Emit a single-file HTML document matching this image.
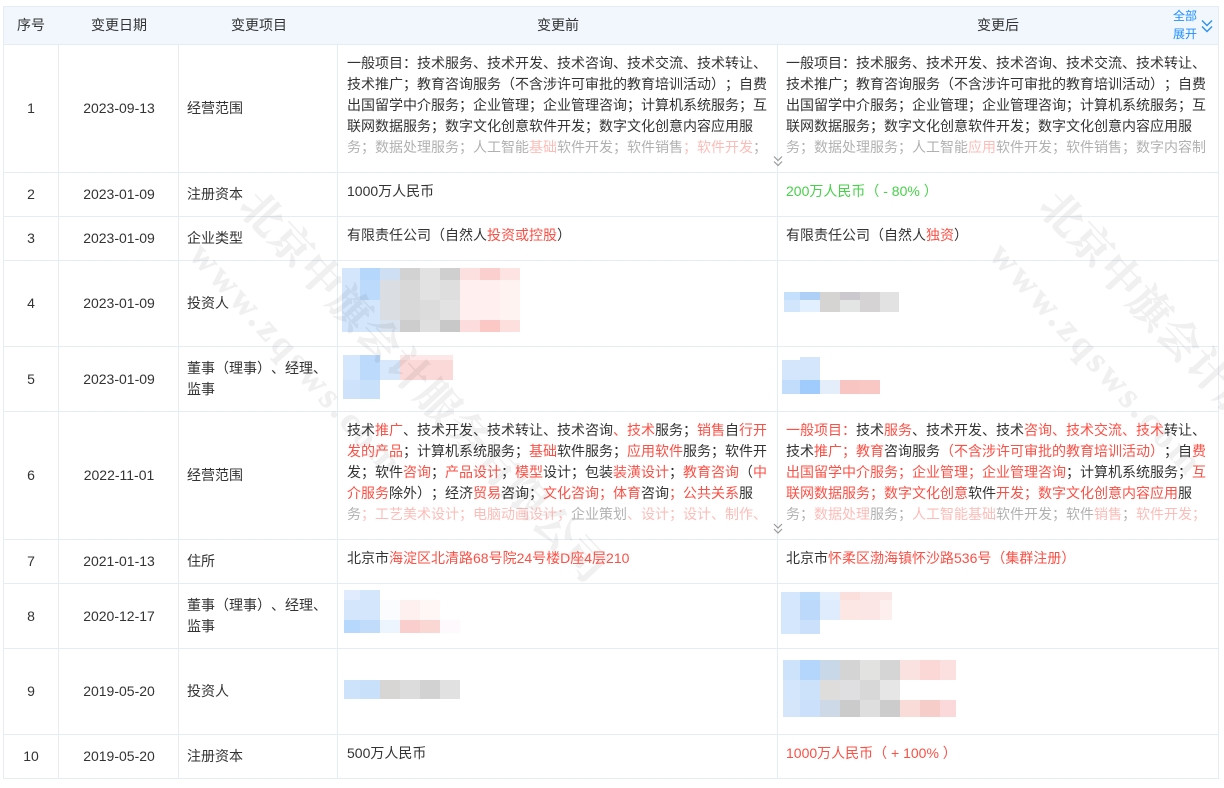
<!DOCTYPE html>
<html lang="zh-CN">
<head>
<meta charset="utf-8">
<title>变更记录</title>
<style>
html,body{margin:0;padding:0;background:#fff;}
body{position:relative;width:1224px;height:788px;overflow:hidden;font-family:"Liberation Sans","Noto Sans CJK SC",sans-serif;font-size:14px;color:#333;text-spacing-trim:space-all;font-feature-settings:"chws" 0,"halt" 0;}
svg.l{position:absolute;left:0;top:0;}
.t{position:absolute;white-space:nowrap;line-height:21px;height:21px;}
.c{text-align:center;transform:translateX(-50%);}
b{font-weight:normal;color:#fa5045;}
.f{opacity:.38;}
.g{color:#46d148;}
.r{color:#fa5045;}
</style>
</head>
<body>
<svg class="l" width="1224" height="788" shape-rendering="crispEdges">
<rect x="3" y="7" width="1215" height="37" fill="#f1f7fd"/>
<g fill="#e4edf5">
<rect x="3" y="6" width="1216" height="1"/>
<rect x="3" y="44" width="1216" height="1"/>
<rect x="3" y="172" width="1216" height="1"/>
<rect x="3" y="216" width="1216" height="1"/>
<rect x="3" y="260" width="1216" height="1"/>
<rect x="3" y="346" width="1216" height="1"/>
<rect x="3" y="411" width="1216" height="1"/>
<rect x="3" y="539" width="1216" height="1"/>
<rect x="3" y="583" width="1216" height="1"/>
<rect x="3" y="648" width="1216" height="1"/>
<rect x="3" y="734" width="1216" height="1"/>
<rect x="3" y="778" width="1216" height="1"/>
<rect x="3" y="6" width="1" height="773"/>
<rect x="58" y="44" width="1" height="735"/>
<rect x="178" y="44" width="1" height="735"/>
<rect x="337" y="44" width="1" height="735"/>
<rect x="777" y="44" width="1" height="735"/>
<rect x="1218" y="6" width="1" height="773"/>
</g>
<!-- row 4 before -->
<g>
<rect x="342" y="268" width="18" height="64" fill="#d3e6fc"/>
<rect x="360" y="268" width="20" height="12" fill="#b5d7fc"/><rect x="360" y="280" width="20" height="20" fill="#bcdafc"/><rect x="360" y="300" width="20" height="32" fill="#d3e6fc"/>
<rect x="380" y="268" width="20" height="12" fill="#cfdff3"/><rect x="380" y="280" width="20" height="40" fill="#dadee3"/><rect x="380" y="320" width="20" height="12" fill="#d8e3ef"/>
<rect x="400" y="268" width="20" height="12" fill="#d2d2d2"/><rect x="400" y="280" width="20" height="40" fill="#d8d8d8"/><rect x="400" y="320" width="20" height="12" fill="#cdcdcd"/>
<rect x="420" y="268" width="20" height="12" fill="#e2e2e2"/><rect x="420" y="280" width="20" height="20" fill="#e2e2e2"/><rect x="420" y="300" width="20" height="20" fill="#dcdcdc"/><rect x="420" y="320" width="20" height="12" fill="#dfdfdf"/>
<rect x="440" y="268" width="20" height="12" fill="#cfcfcf"/><rect x="440" y="280" width="20" height="20" fill="#dedede"/><rect x="440" y="300" width="20" height="20" fill="#e2e2e2"/><rect x="440" y="320" width="20" height="12" fill="#c8c8c8"/>
<rect x="460" y="268" width="20" height="12" fill="#fcdfdf"/><rect x="460" y="280" width="20" height="40" fill="#fff0ef"/><rect x="460" y="320" width="20" height="12" fill="#fcdcdc"/>
<rect x="480" y="268" width="20" height="12" fill="#fbcfcd"/><rect x="480" y="280" width="20" height="40" fill="#ffefee"/><rect x="480" y="320" width="20" height="12" fill="#fbc8c6"/>
<rect x="500" y="268" width="20" height="12" fill="#fde4e2"/><rect x="500" y="280" width="20" height="40" fill="#fff3f2"/><rect x="500" y="320" width="20" height="12" fill="#fde0de"/>
</g>
<!-- row 4 after -->
<g>
<rect x="784" y="292" width="16" height="8" fill="#c5e0fd"/><rect x="784" y="300" width="16" height="12" fill="#d1e5fc"/>
<rect x="800" y="292" width="20" height="8" fill="#aed0f6"/><rect x="800" y="300" width="20" height="12" fill="#e2effe"/>
<rect x="820" y="292" width="20" height="20" fill="#d6d3d3"/>
<rect x="840" y="292" width="20" height="8" fill="#cbc9cd"/><rect x="840" y="300" width="20" height="12" fill="#e3e4e4"/>
<rect x="860" y="292" width="20" height="20" fill="#d5d3d3"/>
<rect x="880" y="292" width="19" height="20" fill="#e2e2e2"/>
</g>
<!-- row 5 before -->
<g>
<rect x="343" y="355" width="17" height="25" fill="#d5e7fd"/><rect x="343" y="380" width="17" height="19" fill="#cfe2fb"/>
<rect x="360" y="355" width="20" height="25" fill="#bcdafc"/><rect x="360" y="380" width="20" height="19" fill="#c9e0fb"/>
<rect x="380" y="360" width="20" height="20" fill="#d8e8fc"/>
<rect x="400" y="355" width="53" height="5" fill="#fde8e7"/><rect x="400" y="360" width="53" height="20" fill="#fbd9d8"/>
</g>
<!-- row 5 after -->
<g>
<rect x="782" y="360" width="18" height="20" fill="#d3e6fc"/><rect x="800" y="357" width="20" height="23" fill="#d3e6fc"/>
<rect x="782" y="380" width="18" height="14" fill="#c2dcfb"/><rect x="800" y="380" width="20" height="14" fill="#9fcbfd"/>
<rect x="820" y="380" width="20" height="14" fill="#e3eefa"/><rect x="840" y="380" width="20" height="14" fill="#f9c5c3"/><rect x="860" y="380" width="20" height="14" fill="#f9c8c5"/>
</g>
<!-- row 8 before -->
<g>
<rect x="344" y="590" width="16" height="10" fill="#e0ecfd"/><rect x="360" y="590" width="20" height="10" fill="#d3e6fc"/>
<rect x="344" y="600" width="36" height="20" fill="#d3e6fc"/>
<rect x="380" y="600" width="20" height="20" fill="#fbfcfe"/><rect x="400" y="600" width="20" height="20" fill="#fef0ee"/><rect x="420" y="600" width="20" height="20" fill="#fff7f5"/>
<rect x="344" y="620" width="16" height="13" fill="#b6d8fd"/><rect x="360" y="620" width="20" height="13" fill="#c1dcfb"/><rect x="380" y="620" width="20" height="13" fill="#ecf4fd"/>
<rect x="400" y="620" width="20" height="13" fill="#f9cecc"/><rect x="420" y="620" width="20" height="13" fill="#fbd7d4"/><rect x="440" y="620" width="20" height="13" fill="#fdf9fc"/>
</g>
<!-- row 8 after -->
<g>
<rect x="781" y="592" width="19" height="42" fill="#d5e7fd"/>
<rect x="800" y="592" width="20" height="8" fill="#bedcfc"/><rect x="800" y="600" width="20" height="20" fill="#bcd8fa"/><rect x="800" y="620" width="20" height="14" fill="#cbe1fb"/>
<rect x="820" y="592" width="20" height="8" fill="#e3effd"/><rect x="820" y="600" width="20" height="20" fill="#deecfd"/>
<rect x="840" y="592" width="20" height="8" fill="#fbdfdc"/><rect x="840" y="600" width="20" height="20" fill="#fde7e5"/>
<rect x="860" y="592" width="20" height="28" fill="#fbe6e5"/>
<rect x="880" y="592" width="12" height="8" fill="#fbe6e5"/><rect x="880" y="600" width="12" height="20" fill="#fdefee"/>
</g>
<!-- row 9 before -->
<g>
<rect x="344" y="680" width="16" height="19" fill="#cde2fb"/><rect x="360" y="680" width="20" height="19" fill="#c9e0fa"/>
<rect x="380" y="680" width="20" height="19" fill="#d8d6d5"/><rect x="400" y="680" width="20" height="19" fill="#dcdcdc"/>
<rect x="420" y="680" width="20" height="19" fill="#d2d2d2"/><rect x="440" y="680" width="20" height="19" fill="#e1e1e1"/>
</g>
<!-- row 9 after -->
<g>
<rect x="783" y="660" width="17" height="20" fill="#cde3fc"/><rect x="800" y="660" width="20" height="20" fill="#b5d6fc"/><rect x="820" y="660" width="20" height="20" fill="#c9d8e9"/>
<rect x="840" y="660" width="20" height="20" fill="#d4d4d4"/><rect x="860" y="660" width="20" height="20" fill="#e2e2e0"/><rect x="880" y="660" width="20" height="20" fill="#d5d5d5"/>
<rect x="900" y="660" width="20" height="20" fill="#fae2e0"/><rect x="920" y="660" width="20" height="20" fill="#fbd8d5"/><rect x="940" y="660" width="16" height="20" fill="#fce0df"/>
<rect x="783" y="680" width="17" height="20" fill="#d3e6fc"/><rect x="800" y="680" width="20" height="20" fill="#cbe2fa"/><rect x="820" y="680" width="20" height="20" fill="#dfdcdc"/>
<rect x="840" y="680" width="20" height="20" fill="#dfdfe1"/><rect x="860" y="680" width="20" height="20" fill="#d8d8d8"/><rect x="880" y="680" width="20" height="20" fill="#e6e6e6"/>
<rect x="783" y="700" width="17" height="17" fill="#d5e6fa"/><rect x="800" y="700" width="20" height="17" fill="#cbe1fb"/><rect x="820" y="700" width="20" height="17" fill="#cdd9e6"/>
<rect x="840" y="700" width="20" height="17" fill="#cbcbcb"/><rect x="860" y="700" width="20" height="17" fill="#dedede"/><rect x="880" y="700" width="20" height="17" fill="#cccccc"/>
<rect x="900" y="700" width="20" height="17" fill="#f9dcd8"/><rect x="920" y="700" width="20" height="17" fill="#f7cdca"/><rect x="940" y="700" width="16" height="17" fill="#fbd9db"/>
</g>
</svg>

<svg class="l" width="1224" height="788" style="overflow:hidden;mix-blend-mode:multiply">
<g fill="#f0f0f0" stroke="#f0f0f0" stroke-width=".5" font-weight="700" font-family="'Liberation Serif','Noto Serif CJK SC',serif">
<text transform="translate(237 208) rotate(47)" font-size="42" letter-spacing="1">北京中旗会计服务有限公司</text>
<text transform="translate(188 256) rotate(48)" font-size="36" letter-spacing="4">www.zqsws.com</text>
<text transform="translate(1037 208) rotate(47)" font-size="42" letter-spacing="1">北京中旗会计服务有限公司</text>
<text transform="translate(988 256) rotate(48)" font-size="36" letter-spacing="4">www.zqsws.com</text>
</g>
</svg>

<!-- header -->
<div class="t c" style="left:31px;top:15px">序号</div>
<div class="t c" style="left:119px;top:15px">变更日期</div>
<div class="t c" style="left:259px;top:15px">变更项目</div>
<div class="t c" style="left:558px;top:15px">变更前</div>
<div class="t c" style="left:998px;top:15px">变更后</div>
<div class="t" style="left:1173px;top:8px;font-size:12px;line-height:17px;height:17px;color:#1f8fff">全部</div>
<div class="t" style="left:1173px;top:26px;font-size:12px;line-height:17px;height:17px;color:#1f8fff">展开</div>
<svg class="l" width="1224" height="788" style="pointer-events:none">
<path d="M1202 20.5l5 5 5-5M1202 26.5l5 5 5-5" fill="none" stroke="#2b8ff5" stroke-width="1.4"/>
<path d="M774 156.5l4 4 4-4M774 161.5l4 4 4-4" fill="none" stroke="#9a9a9a" stroke-width="1.2"/>
<path d="M774 524l4 4 4-4M774 529l4 4 4-4" fill="none" stroke="#9a9a9a" stroke-width="1.2"/>
</svg>

<!-- index col -->
<div class="t c" style="left:31px;top:98px">1</div>
<div class="t c" style="left:31px;top:184px">2</div>
<div class="t c" style="left:31px;top:228px">3</div>
<div class="t c" style="left:31px;top:293px">4</div>
<div class="t c" style="left:31px;top:369px">5</div>
<div class="t c" style="left:31px;top:465px">6</div>
<div class="t c" style="left:31px;top:551px">7</div>
<div class="t c" style="left:31px;top:606px">8</div>
<div class="t c" style="left:31px;top:681px">9</div>
<div class="t c" style="left:31px;top:746px">10</div>

<!-- date col -->
<div class="t c" style="left:119px;top:98px">2023-09-13</div>
<div class="t c" style="left:119px;top:184px">2023-01-09</div>
<div class="t c" style="left:119px;top:228px">2023-01-09</div>
<div class="t c" style="left:119px;top:293px">2023-01-09</div>
<div class="t c" style="left:119px;top:369px">2023-01-09</div>
<div class="t c" style="left:119px;top:465px">2022-11-01</div>
<div class="t c" style="left:119px;top:551px">2021-01-13</div>
<div class="t c" style="left:119px;top:606px">2020-12-17</div>
<div class="t c" style="left:119px;top:681px">2019-05-20</div>
<div class="t c" style="left:119px;top:746px">2019-05-20</div>

<!-- item col -->
<div class="t" style="left:187px;top:98px">经营范围</div>
<div class="t" style="left:187px;top:184px">注册资本</div>
<div class="t" style="left:187px;top:228px">企业类型</div>
<div class="t" style="left:187px;top:293px">投资人</div>
<div class="t" style="left:187px;top:358px">董事&#xFF08;理事&#xFF09;、经理、</div>
<div class="t" style="left:187px;top:379px">监事</div>
<div class="t" style="left:187px;top:465px">经营范围</div>
<div class="t" style="left:187px;top:551px">住所</div>
<div class="t" style="left:187px;top:595px">董事&#xFF08;理事&#xFF09;、经理、</div>
<div class="t" style="left:187px;top:616px">监事</div>
<div class="t" style="left:187px;top:681px">投资人</div>
<div class="t" style="left:187px;top:746px">注册资本</div>

<!-- row 1 before -->
<div class="t" style="left:347px;top:53px">一般项目&#xFF1A;技术服务、技术开发、技术咨询、技术交流、技术转让、</div>
<div class="t" style="left:347px;top:74px">技术推广&#xFF1B;教育咨询服务&#xFF08;不含涉许可审批的教育培训活动&#xFF09;&#xFF1B;自费</div>
<div class="t" style="left:347px;top:95px">出国留学中介服务&#xFF1B;企业管理&#xFF1B;企业管理咨询&#xFF1B;计算机系统服务&#xFF1B;互</div>
<div class="t" style="left:347px;top:116px">联网数据服务&#xFF1B;数字文化创意软件开发&#xFF1B;数字文化创意内容应用服</div>
<div class="t f" style="left:347px;top:137px">务&#xFF1B;数据处理服务&#xFF1B;人工智能<b>基础</b>软件开发&#xFF1B;软件销售<b>&#xFF1B;软件开发</b>&#xFF1B;</div>
<!-- row 1 after -->
<div class="t" style="left:786px;top:53px">一般项目&#xFF1A;技术服务、技术开发、技术咨询、技术交流、技术转让、</div>
<div class="t" style="left:786px;top:74px">技术推广&#xFF1B;教育咨询服务&#xFF08;不含涉许可审批的教育培训活动&#xFF09;&#xFF1B;自费</div>
<div class="t" style="left:786px;top:95px">出国留学中介服务&#xFF1B;企业管理&#xFF1B;企业管理咨询&#xFF1B;计算机系统服务&#xFF1B;互</div>
<div class="t" style="left:786px;top:116px">联网数据服务&#xFF1B;数字文化创意软件开发&#xFF1B;数字文化创意内容应用服</div>
<div class="t f" style="left:786px;top:137px">务&#xFF1B;数据处理服务&#xFF1B;人工智能<b>应用</b>软件开发&#xFF1B;软件销售&#xFF1B;数字内容制</div>

<!-- row 2 -->
<div class="t" style="left:347px;top:181px">1000万人民币</div>
<div class="t g" style="left:786px;top:181px">200万人民币&#xFF08; - 80% &#xFF09;</div>
<!-- row 3 -->
<div class="t" style="left:347px;top:225px">有限责任公司&#xFF08;自然人<b>投资或控股</b>&#xFF09;</div>
<div class="t" style="left:786px;top:225px">有限责任公司&#xFF08;自然人<b>独资</b>&#xFF09;</div>

<!-- row 6 before -->
<div class="t" style="left:347px;top:420px">技术<b>推广</b>、技术开发、技术转让、技术咨询<b>、技术</b>服务&#xFF1B;<b>销售</b>自<b>行开</b></div>
<div class="t" style="left:347px;top:441px"><b>发的产品</b>&#xFF1B;计算机系统服务&#xFF1B;<b>基础</b>软件服务&#xFF1B;<b>应用软件</b>服务&#xFF1B;软件开</div>
<div class="t" style="left:347px;top:462px">发&#xFF1B;软件<b>咨询</b>&#xFF1B;<b>产品设计</b>&#xFF1B;<b>模型</b>设计&#xFF1B;包装<b>装潢设计</b>&#xFF1B;<b>教育咨询</b>&#xFF08;<b>中</b></div>
<div class="t" style="left:347px;top:483px"><b>介服务</b>除外&#xFF09;&#xFF1B;经济<b>贸易</b>咨询&#xFF1B;<b>文化咨询&#xFF1B;体育</b>咨询<b>&#xFF1B;公共关系</b>服</div>
<div class="t f" style="left:347px;top:504px">务<b>&#xFF1B;工艺美术设计&#xFF1B;电脑动画设计&#xFF1B;</b>企业策划<b>、设计&#xFF1B;设计、制作、</b></div>
<!-- row 6 after -->
<div class="t" style="left:786px;top:420px"><b>一般项目&#xFF1A;</b>技术<b>服务</b>、技术开发、技术<b>咨询、技术交流、技术</b>转让、</div>
<div class="t" style="left:786px;top:441px">技术<b>推广&#xFF1B;教育</b>咨询服务<b>&#xFF08;不含涉许可审批的教育培训活动&#xFF09;</b>&#xFF1B;自<b>费</b></div>
<div class="t" style="left:786px;top:462px"><b>出国留学中介服务&#xFF1B;企业管理&#xFF1B;企业管理咨询</b>&#xFF1B;计算机系统服务&#xFF1B;<b>互</b></div>
<div class="t" style="left:786px;top:483px"><b>联网数据服务&#xFF1B;数字文化创意</b>软件<b>开发&#xFF1B;数字文化创意内容应用</b>服</div>
<div class="t f" style="left:786px;top:504px">务&#xFF1B;<b>数据处理</b>服务&#xFF1B;<b>人工智能基础</b>软件开发&#xFF1B;软件<b>销售</b>&#xFF1B;<b>软件开发&#xFF1B;</b></div>

<!-- row 7 -->
<div class="t" style="left:347px;top:548px">北京市<b>海淀区北清路68号院24号楼D座4层210</b></div>
<div class="t" style="left:786px;top:548px">北京市<b>怀柔区渤海镇怀沙路536号&#xFF08;集群注册&#xFF09;</b></div>
<!-- row 10 -->
<div class="t" style="left:347px;top:743px">500万人民币</div>
<div class="t r" style="left:786px;top:743px">1000万人民币&#xFF08; + 100% &#xFF09;</div>
</body>
</html>
